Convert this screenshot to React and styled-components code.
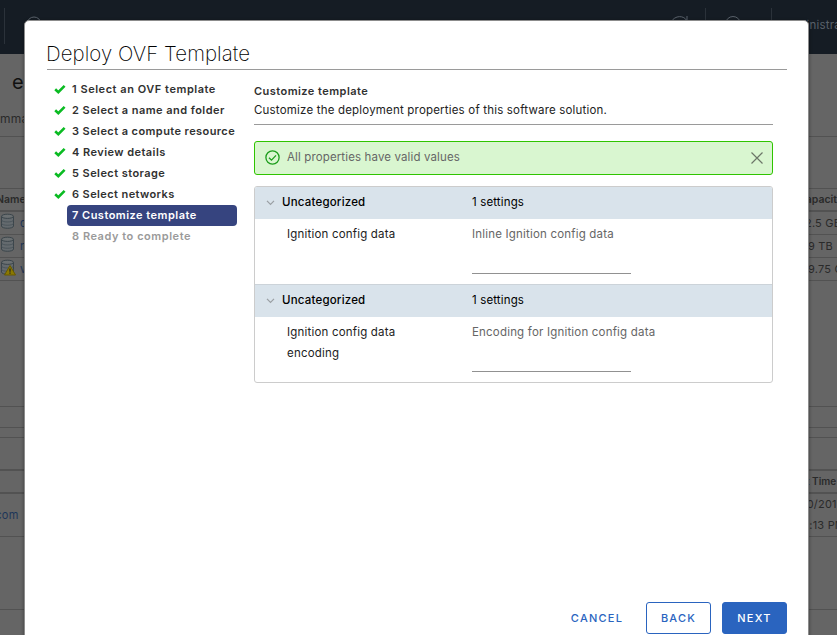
import React from 'react';
import styled, { createGlobalStyle, css } from 'styled-components';

const GlobalStyle = createGlobalStyle`
  * { box-sizing: border-box; }
  body {
    margin: 0;
    overflow: hidden;
    font: 400 11.5px/21px Inter, "Open Sans", sans-serif;
    letter-spacing: 0.19px;
    color: #222;
  }
`;

/* Dimmed application behind the dialog */
const Screen = styled.div`
  position: relative;
  width: 837px;
  height: 635px;
  overflow: hidden;
  background: #656565;
`;
const TopBar = styled.header`
  height: 54px;
  background: #151c24;
  color: #59616a;
  display: flex;
  justify-content: space-between;
  overflow: hidden;
`;
const BarSide = styled.div`
  display: flex;
  align-items: flex-start;
  padding-top: 8px;
`;
const BarDivider = styled.i`
  width: 1px;
  height: 36px;
  background: #2b323a;
  margin-left: ${p => p.$gap}px;
`;
const BarIcon = styled.svg`
  width: 20px;
  height: 20px;
  margin: 8px 0 0 ${p => p.$gap}px;
  fill: none;
  stroke: #59616a;
`;
const UserName = styled.span`
  width: 56px;
  margin: 7px 0 0 9px;
  white-space: nowrap;
`;
const Behind = styled.div`
  display: flex;
  justify-content: space-between;
`;
const Strip = styled.div`
  width: ${p => p.$width}px;
  overflow: hidden;
`;
const StripRow = styled.div`
  height: ${p => p.$h}px;
  padding-left: ${p => p.$pad || 0}px;
  border-bottom: ${p => p.$line || 1}px solid #525252;
  display: flex;
  align-items: center;
  white-space: nowrap;
  color: ${p => (p.$link ? '#1d3659' : '#2a2a2a')};
  font-weight: ${p => (p.$bold ? 600 : 400)};
  font-size: ${p => p.$size || 11}px;
  letter-spacing: ${p => (p.$bold ? 0 : 0.2)}px;
`;
const Pull = styled.span`
  margin-left: -${p => p.$by}px;
  padding-top: ${p => p.$drop || 0}px;
`;
const ObjectName = styled.div`
  height: 43px;
  padding: 16px 0 0 12px;
  font-size: 20px;
  line-height: 24px;
  letter-spacing: 0;
  color: #111;
`;
const StoreIcon = styled.svg`
  width: 16px;
  height: 17px;
  flex: none;
  margin: -4px 4px 0 0;
`;

/* Dialog */
const Dialog = styled.section`
  position: absolute;
  left: 24px;
  top: 20px;
  width: 785px;
  height: 640px;
  padding: 21px 21px 0 22px;
  background: #fff;
  border: 1px solid #8c8c8c;
  border-radius: 5px;
  box-shadow: 0 1px 3px 1px rgba(0, 0, 0, 0.25);
  display: flex;
  flex-direction: column;
`;
const Title = styled.h1`
  margin: 0;
  height: 28px;
  flex: none;
  border-bottom: 1px solid #9a9a9a;
  font-size: 20.4px;
  font-weight: 200;
  line-height: 24px;
  letter-spacing: 0.08px;
  text-indent: -1px;
  color: #000;
`;
const Body = styled.div`
  display: flex;
  height: 511px;
  flex: none;
`;
const Steps = styled.ol`
  width: 207px;
  margin: 0;
  padding: 9px 0 0 6px;
  list-style: none;
`;
const stateStyles = {
  done: css`color: #313131;`,
  current: css`color: #fff; background: #36447f;`,
  pending: css`color: #9a9a9a;`,
};
const Step = styled.li`
  display: flex;
  align-items: center;
  height: 21px;
`;
const StepMark = styled.span`
  width: 14px;
  height: 21px;
  display: flex;
  align-items: center;
  padding: 0 0 1px 1px;
`;
const StepLabel = styled.span`
  width: 170px;
  height: 21px;
  line-height: 21px;
  padding-left: 5px;
  border-radius: 4px;
  font-size: 11px;
  font-weight: 600;
  white-space: nowrap;
  letter-spacing: ${p => p.$track}px;
  ${p => stateStyles[p.$state]}
`;
const Content = styled.main`
  width: 519px;
  padding-top: 11px;
`;
const Intro = styled.div`
  height: 44px;
  border-bottom: 1px solid #9a9a9a;
  line-height: 19px;
  white-space: nowrap;
`;
const Heading = styled.h2`
  margin: 0;
  font-size: 11px;
  font-weight: 600;
  line-height: 20px;
  letter-spacing: 0.46px;
  color: #313131;
`;
const Alert = styled.div`
  height: 34px;
  margin: 16px 0 11px;
  padding: 0 8px 1px 10px;
  border: 1px solid #2fc400;
  border-radius: 3px;
  background: #d9f6d0;
  color: #666;
  display: flex;
  align-items: center;
  letter-spacing: 0.13px;
`;
const AlertText = styled.span`
  flex: 1;
  padding-left: 7px;
`;
const Table = styled.div`
  height: 197px;
  border: 1px solid #ccc;
  border-radius: 3px;
  overflow: hidden;
`;
const Group = styled.div`
  height: ${p => (p.$first ? 32 : 33)}px;
  border-top: ${p => (p.$first ? 0 : 1)}px solid #ccd3d9;
  background: #d9e3eb;
  color: #000;
  display: flex;
  align-items: center;
  padding: 0 0 1px 11px;
`;
const GroupName = styled.span`
  width: 197px;
  padding-left: 7px;
  font-weight: 500;
`;
const Count = styled.span`
  letter-spacing: 0.14px;
`;
const Setting = styled.div`
  height: 65px;
  display: flex;
  padding: 5px 0 0 32px;
`;
const SettingName = styled.div`
  width: 185px;
  padding-right: 55px;
`;
const Field = styled.label`
  color: #666;
  white-space: nowrap;
`;
const FieldText = styled.div`
  height: 26px;
`;
const Input = styled.input`
  display: block;
  width: 159px;
  height: 24px;
  padding: 0;
  border: 0;
  border-bottom: 1px solid #919191;
  background: none;
  outline: 0;
`;
const Footer = styled.footer`
  display: flex;
  justify-content: flex-end;
  margin-top: 21px;
  gap: 11px;
`;
const variants = {
  link: css`width: 76px; border-color: transparent;`,
  outline: css``,
  solid: css`background: #2a64bf; color: #fff;`,
};
const Button = styled.button`
  width: 65px;
  height: 32px;
  padding: 0;
  border: 1px solid #2a64bf;
  border-radius: 3px;
  background: transparent;
  color: #2a64bf;
  font: 500 11px/28px Inter, sans-serif;
  letter-spacing: 1.25px;
  ${p => variants[p.$variant]}
`;

const Check = () => (
  <svg width="12" height="10" viewBox="0 0 12 10">
    <path d="M1.2 5.2 4.3 8.1 10.6 1.8" fill="none" stroke="#0abb22" strokeWidth="2.6" />
  </svg>
);
const Caret = () => (
  <svg width="9" height="6" viewBox="0 0 9 6">
    <path d="M1 .8 4.5 4.5 8 .8" fill="none" stroke="#9a9fa3" strokeWidth="1.2" />
  </svg>
);
const Valid = () => (
  <svg width="15" height="15" viewBox="0 0 15 15" fill="none" stroke="#1d9d1d" strokeWidth="1.3">
    <circle cx="7.5" cy="7.5" r="6.6" />
    <path d="m4 7.7 2.5 2.4L11 5.4" />
  </svg>
);
const Close = () => (
  <svg width="14" height="14" viewBox="0 0 14 14">
    <path d="m1.5 1.5 11 11m0-11-11 11" fill="none" stroke="#6c7668" strokeWidth="1.2" />
  </svg>
);
const Store = ({ warning }) => (
  <StoreIcon viewBox="0 0 16 17">
    <path d="M1.5 3.5v9.5c0 3 12 3 12 0V3.5" fill="#646a6e" stroke="#3b454b" />
    <ellipse cx="7.5" cy="3.3" rx="6" ry="2.1" fill="#6b7072" stroke="#3b454b" />
    <path d="M1.5 7c0 2.6 12 2.6 12 0M1.5 10.3c0 2.6 12 2.6 12 0" fill="none" stroke="#454f55" strokeWidth=".8" />
    {warning && (
      <>
        <path d="M10 6.5 15.5 16H4.5Z" fill="#8b7900" stroke="#675900" />
        <path d="M10 9.5v3.2M10 13.5v1.2" stroke="#222" strokeWidth="1.2" />
      </>
    )}
  </StoreIcon>
);

const steps = [
  ['1 Select an OVF template', 'done', 0.53],
  ['2 Select a name and folder', 'done', 0.45],
  ['3 Select a compute resource', 'done', 0.42],
  ['4 Review details', 'done', 0.45],
  ['5 Select storage', 'done', 0.44],
  ['6 Select networks', 'done', 0.4],
  ['7 Customize template', 'current', 0.48],
  ['8 Ready to complete', 'pending', 0.54],
];
const settings = [
  ['Ignition config data', 'Inline Ignition config data'],
  ['Ignition config data encoding', 'Encoding for Ignition config data'],
];

export default function App() {
  return (
    <Screen>
      <GlobalStyle />
      <TopBar>
        <BarSide>
          <BarDivider $gap={4} />
          <BarIcon $gap={19} viewBox="0 0 20 20"><circle cx="10" cy="8" r="7" /></BarIcon>
        </BarSide>
        <BarSide>
          <BarIcon $gap={0} viewBox="0 0 20 20"><path d="M2 6c4-7 13-7 16-1V0" /></BarIcon>
          <BarDivider $gap={16} />
          <BarIcon $gap={17} viewBox="0 0 20 20"><circle cx="10" cy="8" r="7.5" /></BarIcon>
          <BarDivider $gap={28} />
          <UserName>Administrator</UserName>
        </BarSide>
      </TopBar>
      <Behind>
        <Strip $width={24}>
          <ObjectName>e</ObjectName>
          <StripRow $h={40} $size={12}><Pull $by={0} $drop={3}>mmary</Pull></StripRow>
          <StripRow $h={52} />
          <StripRow $h={23} $line={2} $bold $size={10.5}><Pull $by={4}>Name</Pull></StripRow>
          <StripRow $h={23} $link><Store />d</StripRow>
          <StripRow $h={23} $link><Store />n</StripRow>
          <StripRow $h={23} $link><Store warning />v</StripRow>
          <StripRow $h={126} />
          <StripRow $h={21} />
          <StripRow $h={10} />
          <StripRow $h={33} $line={2} />
          <StripRow $h={23} $line={2} />
          <StripRow $h={43} $link><Pull $by={8}>.com</Pull></StripRow>
          <StripRow $h={73} />
        </Strip>
        <Strip $width={30}>
          <StripRow $h={83} />
          <StripRow $h={52} />
          <StripRow $h={23} $line={2} $bold $size={10.5}><Pull $by={9}>Capacity</Pull></StripRow>
          <StripRow $h={23}><Pull $by={9}>32.5 GB</Pull></StripRow>
          <StripRow $h={23} $pad={1}>9 TB</StripRow>
          <StripRow $h={23}><Pull $by={6}>99.75 GB</Pull></StripRow>
          <StripRow $h={126} />
          <StripRow $h={21} />
          <StripRow $h={10} />
          <StripRow $h={33} $line={2} />
          <StripRow $h={23} $line={2} $bold $size={10}><Pull $by={21}>Start Time</Pull></StripRow>
          <StripRow $h={43}><Pull $by={5}>10/2019<br />4:13 PM</Pull></StripRow>
          <StripRow $h={73} />
        </Strip>
      </Behind>
      <Dialog>
        <Title>Deploy OVF Template</Title>
        <Body>
          <Steps>
            {steps.map(([label, state, track]) => (
              <Step key={label}>
                <StepMark>{state === 'done' && <Check />}</StepMark>
                <StepLabel $state={state} $track={track}>{label}</StepLabel>
              </Step>
            ))}
          </Steps>
          <Content>
            <Intro>
              <Heading>Customize template</Heading>
              Customize the deployment properties of this software solution.
            </Intro>
            <Alert>
              <Valid />
              <AlertText>All properties have valid values</AlertText>
              <Close />
            </Alert>
            <Table>
              {settings.map(([name, hint], i) => (
                <React.Fragment key={name}>
                  <Group $first={i === 0}>
                    <Caret />
                    <GroupName>Uncategorized</GroupName>
                    <Count>1 settings</Count>
                  </Group>
                  <Setting>
                    <SettingName>{name}</SettingName>
                    <Field>
                      <FieldText>{hint}</FieldText>
                      <Input />
                    </Field>
                  </Setting>
                </React.Fragment>
              ))}
            </Table>
          </Content>
        </Body>
        <Footer>
          <Button $variant="link">CANCEL</Button>
          <Button $variant="outline">BACK</Button>
          <Button $variant="solid">NEXT</Button>
        </Footer>
      </Dialog>
    </Screen>
  );
}
